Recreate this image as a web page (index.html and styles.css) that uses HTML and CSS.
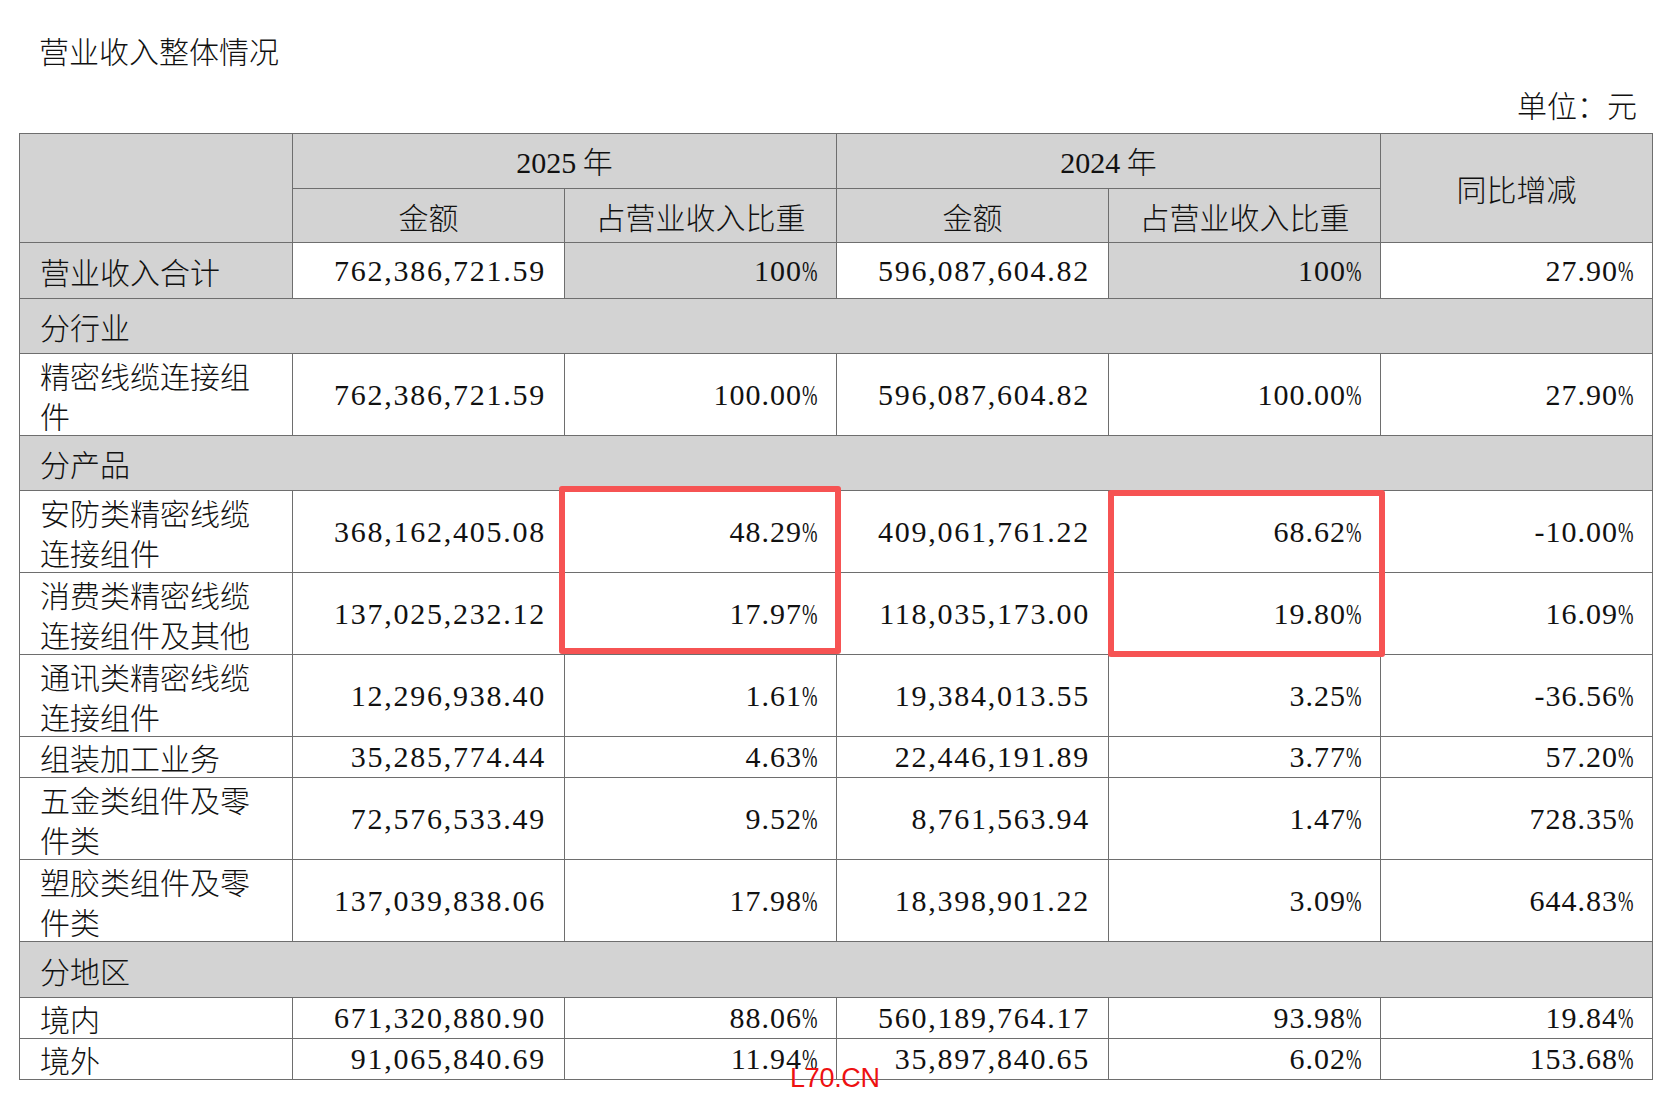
FILE: index.html
```html
<!DOCTYPE html>
<html lang="zh-CN">
<head>
<meta charset="utf-8">
<title>营业收入整体情况</title>
<link rel="stylesheet" href="styles.css">
</head>
<body>
<div class="page">
  <div class="title">营业收入整体情况</div>
  <div class="unit">单位：元</div>
  <div class="table-wrap">
    <table class="rev">
      <colgroup>
        <col class="c1"><col class="cn"><col class="cn"><col class="cn"><col class="cn"><col class="cn">
      </colgroup>
      <tr class="h1">
        <td class="g" rowspan="2"></td>
        <td class="g ctr" colspan="2"><span class="yr">2025</span> 年</td>
        <td class="g ctr" colspan="2"><span class="yr">2024</span> 年</td>
        <td class="g ctr" rowspan="2">同比增减</td>
      </tr>
      <tr class="h2">
        <td class="g ctr">金额</td>
        <td class="g ctr">占营业收入比重</td>
        <td class="g ctr">金额</td>
        <td class="g ctr">占营业收入比重</td>
      </tr>
      <tr class="rt">
        <td class="g lbl">营业收入合计</td>
        <td class="num amt">762,386,721.59</td>
        <td class="num g">100<span class="pct">%</span></td>
        <td class="num amt">596,087,604.82</td>
        <td class="num g">100<span class="pct">%</span></td>
        <td class="num">27.90<span class="pct">%</span></td>
      </tr>
      <tr class="rs">
        <td class="g lbl" colspan="6">分行业</td>
      </tr>
      <tr class="r2">
        <td class="lbl">精密线缆连接组<br>件</td>
        <td class="num amt">762,386,721.59</td>
        <td class="num">100.00<span class="pct">%</span></td>
        <td class="num amt">596,087,604.82</td>
        <td class="num">100.00<span class="pct">%</span></td>
        <td class="num">27.90<span class="pct">%</span></td>
      </tr>
      <tr class="rs">
        <td class="g lbl" colspan="6">分产品</td>
      </tr>
      <tr class="r2">
        <td class="lbl">安防类精密线缆<br>连接组件</td>
        <td class="num amt">368,162,405.08</td>
        <td class="num">48.29<span class="pct">%</span></td>
        <td class="num amt">409,061,761.22</td>
        <td class="num">68.62<span class="pct">%</span></td>
        <td class="num">-10.00<span class="pct">%</span></td>
      </tr>
      <tr class="r2">
        <td class="lbl">消费类精密线缆<br>连接组件及其他</td>
        <td class="num amt">137,025,232.12</td>
        <td class="num">17.97<span class="pct">%</span></td>
        <td class="num amt">118,035,173.00</td>
        <td class="num">19.80<span class="pct">%</span></td>
        <td class="num">16.09<span class="pct">%</span></td>
      </tr>
      <tr class="r2">
        <td class="lbl">通讯类精密线缆<br>连接组件</td>
        <td class="num amt">12,296,938.40</td>
        <td class="num">1.61<span class="pct">%</span></td>
        <td class="num amt">19,384,013.55</td>
        <td class="num">3.25<span class="pct">%</span></td>
        <td class="num">-36.56<span class="pct">%</span></td>
      </tr>
      <tr class="r1">
        <td class="lbl">组装加工业务</td>
        <td class="num amt">35,285,774.44</td>
        <td class="num">4.63<span class="pct">%</span></td>
        <td class="num amt">22,446,191.89</td>
        <td class="num">3.77<span class="pct">%</span></td>
        <td class="num">57.20<span class="pct">%</span></td>
      </tr>
      <tr class="r2">
        <td class="lbl">五金类组件及零<br>件类</td>
        <td class="num amt">72,576,533.49</td>
        <td class="num">9.52<span class="pct">%</span></td>
        <td class="num amt">8,761,563.94</td>
        <td class="num">1.47<span class="pct">%</span></td>
        <td class="num">728.35<span class="pct">%</span></td>
      </tr>
      <tr class="r2">
        <td class="lbl">塑胶类组件及零<br>件类</td>
        <td class="num amt">137,039,838.06</td>
        <td class="num">17.98<span class="pct">%</span></td>
        <td class="num amt">18,398,901.22</td>
        <td class="num">3.09<span class="pct">%</span></td>
        <td class="num">644.83<span class="pct">%</span></td>
      </tr>
      <tr class="rs rs-last">
        <td class="g lbl" colspan="6">分地区</td>
      </tr>
      <tr class="r1">
        <td class="lbl">境内</td>
        <td class="num amt">671,320,880.90</td>
        <td class="num">88.06<span class="pct">%</span></td>
        <td class="num amt">560,189,764.17</td>
        <td class="num">93.98<span class="pct">%</span></td>
        <td class="num">19.84<span class="pct">%</span></td>
      </tr>
      <tr class="r1">
        <td class="lbl">境外</td>
        <td class="num amt">91,065,840.69</td>
        <td class="num">11.94<span class="pct">%</span></td>
        <td class="num amt">35,897,840.65</td>
        <td class="num">6.02<span class="pct">%</span></td>
        <td class="num">153.68<span class="pct">%</span></td>
      </tr>
    </table>
    <div class="mark mark-a"></div>
    <div class="mark mark-b"></div>
    <div class="watermark">L70.CN</div>
  </div>
</div>
</body>
</html>
```

FILE: styles.css
```css
html, body {
  margin: 0;
  padding: 0;
  background: #ffffff;
}

body {
  font-family: "Noto Sans CJK SC", "Liberation Serif", sans-serif;
  color: #111111;
  font-weight: 300;
}

.page {
  width: 1672px;
  height: 1098px;
  padding: 30px 20px 0 19px;
  box-sizing: border-box;
  overflow: hidden;
}

.title {
  font-size: 30px;
  line-height: 40px;
  height: 40px;
  padding-left: 20px;
}

.unit {
  margin-top: 14px;
  font-size: 30px;
  line-height: 40px;
  height: 40px;
  text-align: right;
  padding-right: 15px;
}

.table-wrap {
  position: relative;
  margin-top: 9px;
  width: 1633px;
}

.rev {
  border-collapse: collapse;
  table-layout: fixed;
  width: 1633px;
  font-size: 30px;
  line-height: 40px;
}

.c1 { width: 273px; }
.cn { width: 272px; }

.rev td {
  border: 1px solid #6e6e6e;
  padding: 0 19px 0 20px;
  vertical-align: middle;
  white-space: nowrap;
  background: #ffffff;
}

.rev td.g {
  background: #d3d3d3;
}

.rev td.ctr {
  text-align: center;
  padding: 0;
}

.yr {
  font-family: "Liberation Serif", serif;
  font-weight: 400;
}

.rev td.lbl {
  text-align: left;
}

.rev td.num {
  text-align: right;
  font-family: "Liberation Serif", "Noto Sans CJK SC", serif;
  font-weight: 400;
  letter-spacing: 1px;
  padding-right: 19px;
}

.rev td.amt {
  letter-spacing: 1.75px;
  padding-right: 18px;
}

.pct {
  display: inline-block;
  width: 15px;
  letter-spacing: 0;
  transform: scaleX(0.62);
  transform-origin: left center;
}

.h1 { height: 55px; }
.h2 { height: 54px; }
.rt { height: 56px; }
.rs { height: 55px; }
.rs-last { height: 56px; }
.r2 { height: 82px; }
.r1 { height: 41px; }

.mark {
  position: absolute;
  border: 6px solid #f65353;
  border-radius: 3px;
  box-sizing: border-box;
}

.mark-a {
  left: 540px;
  top: 353px;
  width: 282px;
  height: 168px;
}

.mark-b {
  left: 1089px;
  top: 357px;
  width: 277px;
  height: 167px;
}

.watermark {
  position: absolute;
  left: 771px;
  top: 932px;
  font-family: "Liberation Sans", sans-serif;
  font-size: 27px;
  line-height: 27px;
  font-weight: 400;
  color: #ee1111;
  letter-spacing: -0.3px;
}
```
